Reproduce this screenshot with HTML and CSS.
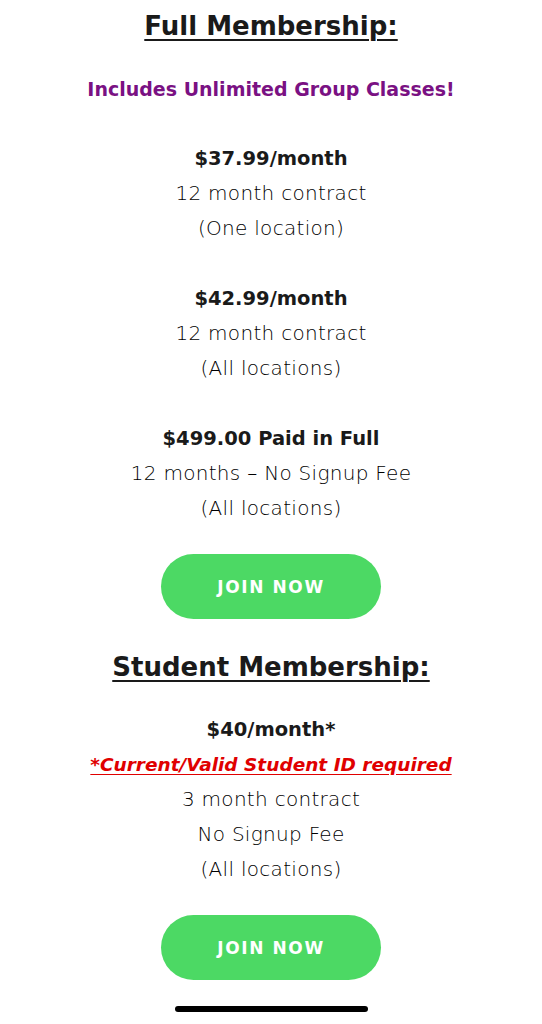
FILE: index.html
```html
<!DOCTYPE html>
<html lang="en">
<head>
    <meta charset="UTF-8">
    <meta name="viewport" content="width=device-width, initial-scale=1.0">
    <title>Membership</title>
    <link rel="stylesheet" href="styles.css">
</head>
<body>
    <div class="page">
        <h2 class="title">Full Membership:</h2>
        <p class="promo">Includes Unlimited Group Classes!</p>

        <div class="plan">
            <div class="price">$37.99/month</div>
            <div class="line">12 month contract</div>
            <div class="line">(One location)</div>
        </div>

        <div class="plan">
            <div class="price">$42.99/month</div>
            <div class="line">12 month contract</div>
            <div class="line">(All locations)</div>
        </div>

        <div class="plan">
            <div class="price">$499.00 Paid in Full</div>
            <div class="line">12 months &ndash; No Signup Fee</div>
            <div class="line">(All locations)</div>
        </div>

        <a class="button" href="#">JOIN NOW</a>

        <h2 class="title student">Student Membership:</h2>

        <div class="plan">
            <div class="price">$40/month*</div>
            <div class="note">*Current/Valid Student ID required</div>
            <div class="line">3 month contract</div>
            <div class="line">No Signup Fee</div>
            <div class="line">(All locations)</div>
        </div>

        <a class="button" href="#">JOIN NOW</a>

        <div class="home-bar"></div>
    </div>
</body>
</html>
```

FILE: styles.css
```css
* {
    box-sizing: border-box;
}
body {
    margin: 0;
    background: #ffffff;
    color: #1a1a1a;
    font-family: "DejaVu Sans", "Open Sans", sans-serif;
}
.page {
    width: 542px;
    height: 1024px;
    display: flex;
    flex-direction: column;
    align-items: center;
    text-align: center;
    padding-top: 8px;
}
.title {
    margin: 0;
    font-size: 26px;
    line-height: 36px;
    font-weight: 700;
    text-decoration: underline;
    text-decoration-thickness: 2px;
    text-underline-offset: 4px;
    color: #1a1a1a;
}
.title.student {
    margin-top: 30px;
}
.promo {
    margin: 28px 0 0;
    font-size: 19px;
    line-height: 34px;
    font-weight: 700;
    color: #7a1183;
}
.plan {
    margin-top: 35px;
    font-size: 20px;
    line-height: 35px;
}
.title.student + .plan {
    margin-top: 27px;
}
.price {
    font-size: 19.5px;
    font-weight: 700;
}
.line {
    font-weight: 300;
    color: #000000;
    letter-spacing: 0.3px;
}
.note {
    font-size: 18.5px;
    font-weight: 700;
    font-style: italic;
    color: #e00000;
    text-decoration: underline;
    text-underline-offset: 3px;
}
.button {
    display: flex;
    align-items: center;
    justify-content: center;
    width: 220px;
    height: 65px;
    margin-top: 28px;
    border-radius: 33px;
    background: #4cd964;
    color: #ffffff;
    font-size: 17px;
    font-weight: 700;
    letter-spacing: 1.6px;
    text-decoration: none;
}
.home-bar {
    width: 193px;
    height: 6px;
    margin-top: 26px;
    border-radius: 3px;
    background: #000000;
}
```
